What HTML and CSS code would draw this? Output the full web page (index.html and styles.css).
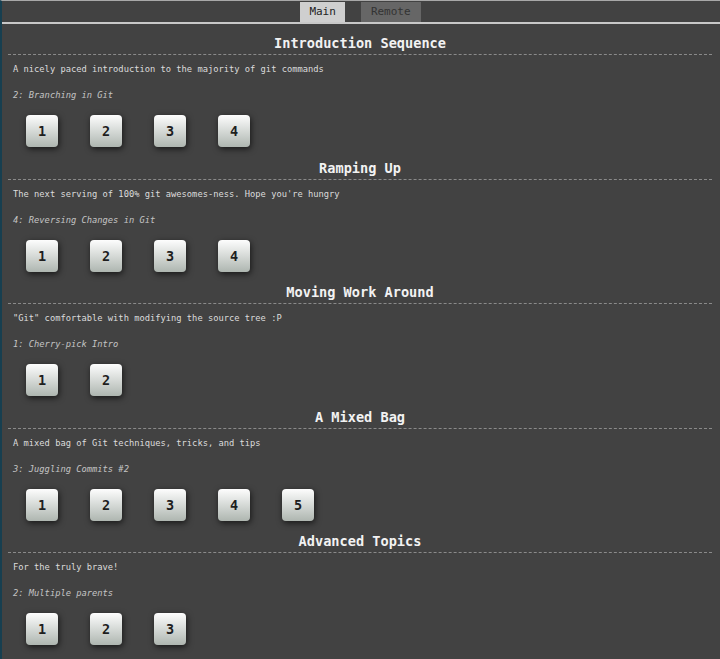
FILE: index.html
```html
<!DOCTYPE html>
<html>
<head>
<meta charset="utf-8">
<link rel="stylesheet" href="styles.css">
</head>
<body>
<div class="tabs">
  <div class="tab active">Main</div>
  <div class="tab">Remote</div>
</div>
<div class="content">
  <section class="seq">
    <h2 class="title">Introduction Sequence</h2>
    <p class="desc">A nicely paced introduction to the majority of git commands</p>
    <p class="level">2: Branching in Git</p>
    <div class="buttons"><div class="btn">1</div><div class="btn">2</div><div class="btn">3</div><div class="btn">4</div></div>
  </section>
  <section class="seq">
    <h2 class="title">Ramping Up</h2>
    <p class="desc">The next serving of 100% git awesomes-ness. Hope you're hungry</p>
    <p class="level">4: Reversing Changes in Git</p>
    <div class="buttons"><div class="btn">1</div><div class="btn">2</div><div class="btn">3</div><div class="btn">4</div></div>
  </section>
  <section class="seq">
    <h2 class="title">Moving Work Around</h2>
    <p class="desc">"Git" comfortable with modifying the source tree :P</p>
    <p class="level">1: Cherry-pick Intro</p>
    <div class="buttons"><div class="btn">1</div><div class="btn">2</div></div>
  </section>
  <section class="seq">
    <h2 class="title">A Mixed Bag</h2>
    <p class="desc">A mixed bag of Git techniques, tricks, and tips</p>
    <p class="level">3: Juggling Commits #2</p>
    <div class="buttons"><div class="btn">1</div><div class="btn">2</div><div class="btn">3</div><div class="btn">4</div><div class="btn">5</div></div>
  </section>
  <section class="seq">
    <h2 class="title">Advanced Topics</h2>
    <p class="desc">For the truly brave!</p>
    <p class="level">2: Multiple parents</p>
    <div class="buttons"><div class="btn">1</div><div class="btn">2</div><div class="btn">3</div></div>
  </section>
</div>
</body>
</html>
```
FILE: styles.css
```css
html, body {
  margin: 0;
  padding: 0;
}
body {
  background: #424242;
  border-left: 2px solid #173f50;
  border-top: 1px solid #a8a8a8;
  font-family: "DejaVu Sans Mono", "Liberation Mono", monospace;
  color: #ddd;
  height: 658px;
  overflow: hidden;
}
.tabs {
  display: flex;
  justify-content: center;
  gap: 16px;
  padding-top: 1px;
  padding-right: 1px;
  border-bottom: 2px solid #c8c8c8;
}
.tab {
  height: 20px;
  line-height: 20px;
  padding: 0 9px;
  font-size: 11px;
  background: #666;
  color: #333;
}
.tab.active {
  background: #cfcfcf;
  color: #222;
}
.tab:not(.active) {
  padding: 0 10px;
}
.content {
  padding: 0 8px 0 6px;
}
.seq {
  padding-bottom: 1.5px;
}
.title {
  margin: 10px 0 0;
  font-size: 13.6px;
  line-height: 18px;
  font-weight: bold;
  color: #f2f2f2;
  text-align: center;
  padding-bottom: 2px;
  border-bottom: 1px dashed #8a8a8a;
}
.desc {
  margin: 9px 0 0 5px;
  font-size: 8.75px;
  line-height: 11px;
  color: #dcdcdc;
}
.level {
  margin: 15px 0 0 5px;
  font-size: 8.75px;
  line-height: 11px;
  font-style: italic;
  color: #c4c4c4;
}
.buttons {
  display: flex;
  gap: 32px;
  margin: 14px 0 0 18px;
}
.btn {
  width: 32px;
  height: 32px;
  border-radius: 4px;
  background: linear-gradient(#fdfdfd, #aeb6b0);
  box-shadow: 1px 2px 6px rgba(0, 0, 0, 0.65);
  color: #1e1e1e;
  font-weight: bold;
  font-size: 13.5px;
  display: flex;
  align-items: center;
  justify-content: center;
}
```
